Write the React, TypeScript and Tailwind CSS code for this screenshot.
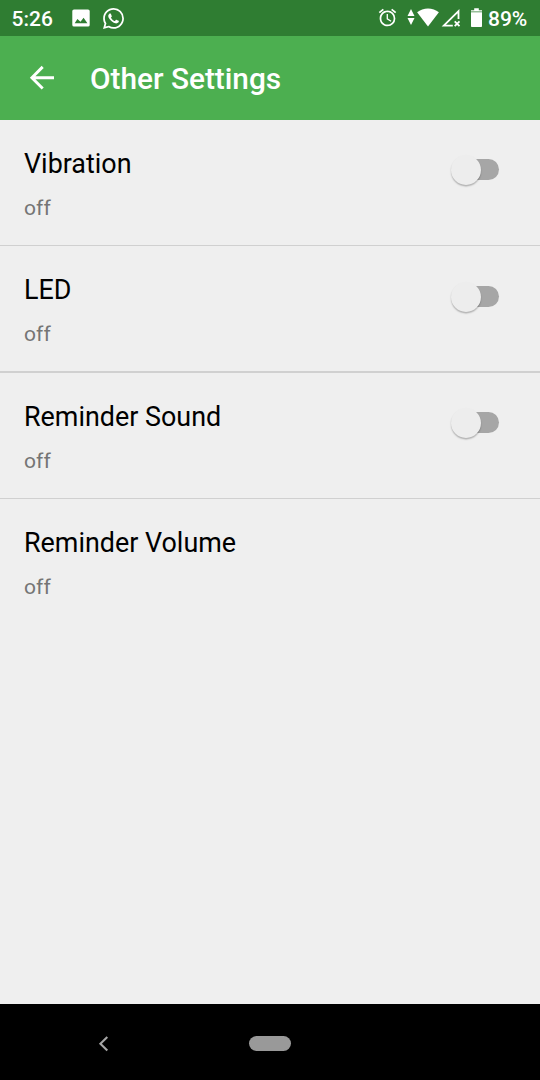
import React from "react";

function StatusBar() {
  return (
    <header className="flex h-9 shrink-0 items-center bg-[#2f7d32] pl-[11.5px] text-[21px] font-medium leading-9 text-white">
      <span className="w-[60px] pt-px">5:26</span>
      <svg className="h-[18px] w-[18px]" viewBox="0 0 18 18" fill="currentColor">
        <path
          fillRule="evenodd"
          d="M2 .4h14a1.7 1.7 0 0 1 1.7 1.7v13.8a1.7 1.7 0 0 1-1.7 1.7H2a1.7 1.7 0 0 1-1.7-1.7V2.1A1.7 1.7 0 0 1 2 .4ZM5.4 10 2.7 14.2h12.7L11.6 8.8 8.5 12.8Z"
        />
      </svg>
      <svg className="ml-[13px] h-[21px] w-[21px]" viewBox="0 0 24 24" fill="currentColor">
        <path d="M17.472 14.382c-.297-.149-1.758-.867-2.03-.967-.273-.099-.471-.148-.67.15-.197.297-.767.966-.94 1.164-.173.199-.347.223-.644.075-.297-.15-1.255-.463-2.39-1.475-.883-.788-1.48-1.761-1.653-2.059-.173-.297-.018-.458.13-.606.134-.133.298-.347.446-.52.149-.174.198-.298.298-.497.099-.198.05-.371-.025-.52-.075-.149-.669-1.612-.916-2.207-.242-.579-.487-.5-.669-.51-.173-.008-.371-.01-.57-.01-.198 0-.52.074-.792.372-.272.297-1.04 1.016-1.04 2.479 0 1.462 1.065 2.875 1.213 3.074.149.198 2.096 3.2 5.077 4.487.709.306 1.262.489 1.694.625.712.227 1.36.195 1.871.118.571-.085 1.758-.719 2.006-1.413.248-.694.248-1.289.173-1.413-.074-.124-.272-.198-.57-.347m-5.421 7.403h-.004a9.87 9.87 0 0 1-5.031-1.378l-.361-.214-3.741.982.998-3.648-.235-.374a9.86 9.86 0 0 1-1.51-5.26c.001-5.45 4.436-9.884 9.888-9.884 2.64 0 5.122 1.03 6.988 2.898a9.825 9.825 0 0 1 2.893 6.994c-.003 5.45-4.437 9.884-9.885 9.884m8.413-18.297A11.815 11.815 0 0 0 12.05 0C5.495 0 .16 5.335.157 11.892c0 2.096.547 4.142 1.588 5.945L.057 24l6.305-1.654a11.882 11.882 0 0 0 5.683 1.448h.005c6.554 0 11.89-5.335 11.893-11.893a11.821 11.821 0 0 0-3.48-8.413z" />
      </svg>
      <div className="ml-auto flex h-9 items-center">
        <svg className="-mt-px h-[21px] w-[21px]" viewBox="0 0 24 24" fill="currentColor">
          <path d="M22 5.72l-4.6-3.86-1.29 1.53 4.6 3.86L22 5.72zM7.88 3.39L6.6 1.86 2 5.71l1.29 1.53 4.59-3.85zM12.5 8H11v6l4.75 2.85.75-1.23-4-2.37V8zM12 4c-4.97 0-9 4.03-9 9s4.02 9 9 9a9 9 0 0 0 0-18zm0 16c-3.87 0-7-3.13-7-7s3.13-7 7-7 7 3.13 7 7-3.13 7-7 7z" />
        </svg>
        <svg className="ml-[9px] h-[18px] w-[8px]" viewBox="0 0 8 18" fill="currentColor">
          <path d="M4 0 7.5 7H.5ZM4 16 .5 9h7Z" />
        </svg>
        <svg className="ml-[2px] h-[20px] w-[22px]" viewBox="0 0 22 20" fill="currentColor">
          <path d="M11 18.5 .1 4.3C3.2 1.7 7 .4 11 .4s7.8 1.3 10.9 3.9Z" />
        </svg>
        <svg className="ml-[2px] h-[20px] w-[20px]" viewBox="0 0 20 20" fill="none" stroke="currentColor">
          <path d="M11.8 17.7H2.8L17.5 3.1v8" strokeWidth="1.8" />
          <path d="m13.7 13.3 4.8 4.8m0-4.8-4.8 4.8" strokeWidth="1.8" />
        </svg>
        <svg className="ml-[10px] h-[20px] w-[11px]" viewBox="0 0 11 20" fill="currentColor">
          <path d="M3.2.3h4.6v2H11v1.2H0V2.3h3.2ZM0 4.3h11v14a.8.8 0 0 1-.8.8H.8a.8.8 0 0 1-.8-.8Z" />
        </svg>
        <span className="ml-[6px] w-[52px] pt-px">89%</span>
      </div>
    </header>
  );
}

function Toggle({ className }: { className: string }) {
  return (
    <button
      type="button"
      role="switch"
      aria-checked="false"
      className={`mr-[41px] flex h-[21px] w-[44px] items-center rounded-full bg-[#a6a6a6] ${className}`}
    >
      <span className="-ml-1 h-[30px] w-[30px] shrink-0 rounded-full bg-[#ededed] shadow-[0_1.5px_1.5px_rgba(0,0,0,0.26)]" />
    </button>
  );
}

function SettingRow({ label, toggle, className }: { label: string; toggle?: string; className: string }) {
  return (
    <section className={`flex items-start justify-between border-[#d0d0d0] pl-6 ${className}`}>
      <div className="pt-7">
        <h2 className="text-[26.9px] leading-8 text-black">{label}</h2>
        <p className="mt-[14px] text-[21px] leading-7 tracking-[0.1px] text-[#757575]">off</p>
      </div>
      {toggle && <Toggle className={toggle} />}
    </section>
  );
}

export default function App() {
  return (
    <div className="flex h-[1080px] w-[540px] flex-col bg-[#efefef] font-['Roboto',sans-serif]">
      <StatusBar />
      <div className="flex h-[84px] shrink-0 items-center bg-[#4caf50] pl-[28px] text-white">
        <svg className="h-[28px] w-[28px]" viewBox="0 0 28 28" fill="none" stroke="currentColor" strokeWidth="2.9">
          <path d="M26 13.7H4M14.7 2.9 3.9 13.7l10.8 10.8" />
        </svg>
        <h1 className="ml-[34px] pt-px text-[29.8px] font-medium leading-9">Other Settings</h1>
      </div>
      <main className="grow">
        <SettingRow label="Vibration" toggle="mt-[39px]" className="h-[126px] border-b" />
        <SettingRow label="LED" toggle="mt-[40px]" className="h-[127px] border-b-2" />
        <SettingRow label="Reminder Sound" toggle="mt-[39px]" className="h-[126px] border-b" />
        <SettingRow label="Reminder Volume" className="h-[126px]" />
      </main>
      <nav className="flex h-[76px] shrink-0 items-center bg-black pl-[97px] pt-[3px]">
        <svg className="h-[18px] w-[14px]" viewBox="0 0 14 18" fill="none" stroke="#a5a5a5" strokeWidth="2.1">
          <path d="M10.3 2 3.4 8.8l6.9 6.8" />
        </svg>
        <span className="ml-[138px] h-[15px] w-[42px] rounded-full bg-[#999999]" />
      </nav>
    </div>
  );
}
